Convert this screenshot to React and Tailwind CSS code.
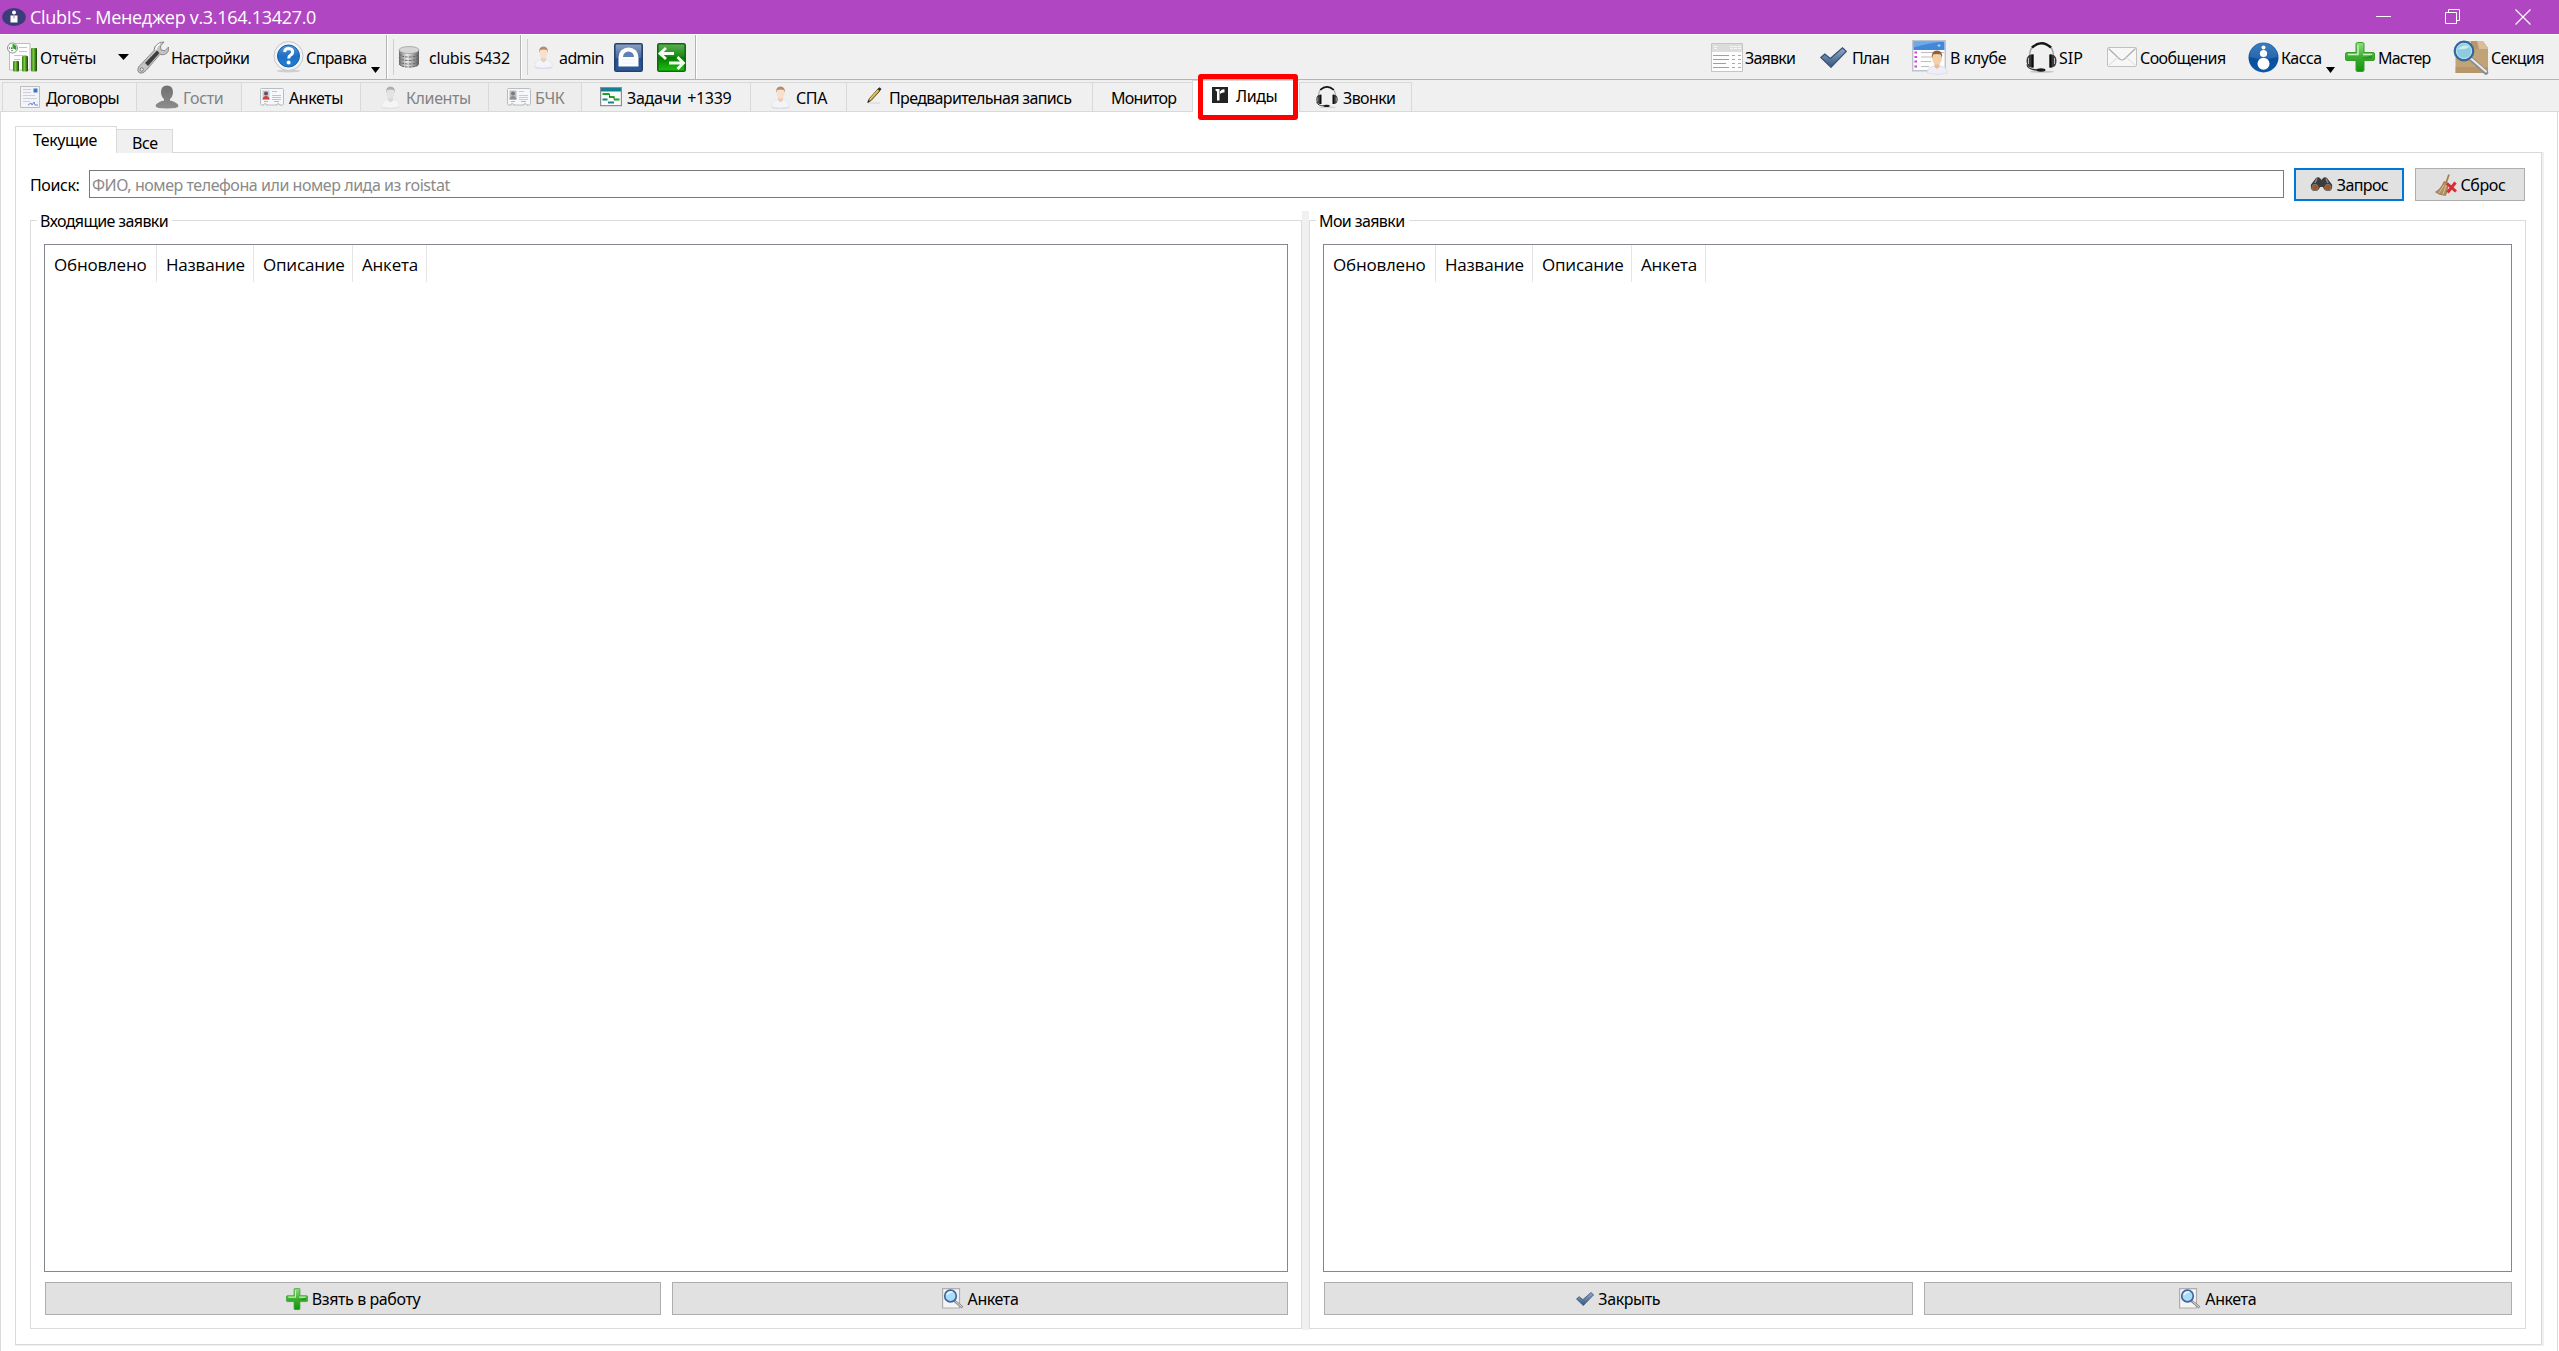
import React from "react";

/* ---------- Icons ---------- */

const LogoIcon = () => (
  <svg width="24" height="18" viewBox="0 0 24 18">
    <ellipse cx="12" cy="9" rx="11.8" ry="9" fill="#3b3c78" />
    <circle cx="12" cy="4.6" r="2" fill="#fff" />
    <path d="M8.5 7.5h7v7h-7z" fill="#fff" />
    <path d="M12 7.5v3" stroke="#8d8db5" />
  </svg>
);

const ReportIcon = () => (
  <svg width="30" height="30" viewBox="0 0 30 30">
    <defs>
      <linearGradient id="bar" x1="0" x2="1">
        <stop offset="0" stopColor="#2d7a10" />
        <stop offset=".4" stopColor="#7ccb3e" />
        <stop offset="1" stopColor="#123f06" />
      </linearGradient>
    </defs>
    <path d="M2.500 1.500h20.500v26.500H2.500z" fill="#fdfdfd" stroke="#bdbdbd" />
    <path d="M12 5.500h8M12 9.500h8M7 13.500h13M7 17.500h6" stroke="#c4c4c4" />
    <circle cx="5.500" cy="6" r="5" fill="#f6f6f6" stroke="#8e9a8e" />
    <path d="M5.500 6V2a4 4 0 0 1 3.500 6z" fill="#28a428" />
    <path d="M5 6v4M5 6L2 6" stroke="#333" strokeDasharray="1 1" />
    <rect x="6" y="19" width="6" height="10.500" rx="1" fill="url(#bar)" />
    <rect x="15" y="14" width="6" height="15.500" rx="1" fill="url(#bar)" />
    <rect x="24" y="6" width="6" height="23.500" rx="1" fill="url(#bar)" />
  </svg>
);

const WrenchIcon = () => (
  <svg width="32" height="33" viewBox="0 0 32 33">
    <path
      d="M20 3.500Q23 .5 27 1l-3.500 4 .5 4 4 .8L31.500 6q.8 5-3 7-2.500 1.500-5.500.3L9 29.500q-3 3.500-6.500 2.500-3-2-1-6L17 9.500q0-4 3-6z"
      fill="#c4c4c4"
      stroke="#777"
      strokeWidth=".8"
    />
    <path d="M8 22L20 9.500l2.500 2.500L11 25z" fill="#3e3e3e" />
    <path d="M19 9q0-4 4-6" stroke="#fff" strokeWidth="1.500" fill="none" />
    <circle cx="4.800" cy="28.500" r="1.600" fill="#efefef" stroke="#666" strokeWidth=".8" />
  </svg>
);

const HelpIcon = () => (
  <svg width="31" height="32" viewBox="0 0 31 32">
    <defs>
      <linearGradient id="help" x1="0" x2="0" y1="0" y2="1">
        <stop offset="0" stopColor="#5c9bd8" />
        <stop offset=".5" stopColor="#1e6fc4" />
        <stop offset="1" stopColor="#1d7fd8" />
      </linearGradient>
    </defs>
    <ellipse cx="15.500" cy="30" rx="12" ry="1.500" fill="#cfcfcf" />
    <circle cx="15.500" cy="15" r="14.500" fill="#f1f3f5" stroke="#c2c6ca" />
    <circle cx="15.500" cy="15" r="11" fill="url(#help)" stroke="#1b5da6" />
    <path
      d="M11.500 11q.3-3.500 4.200-3.500 4 .2 4 3.500 0 2-2.300 3.300-1.700 1-1.700 3.200"
      stroke="#fff"
      strokeWidth="3"
      fill="none"
    />
    <circle cx="15.600" cy="21.500" r="2" fill="#fff" />
  </svg>
);

const DatabaseIcon = () => (
  <svg width="22" height="22" viewBox="0 0 22 22">
    <defs>
      <linearGradient id="db" x1="0" x2="1">
        <stop offset="0" stopColor="#6c6c6c" />
        <stop offset=".4" stopColor="#ededed" />
        <stop offset="1" stopColor="#5e5e5e" />
      </linearGradient>
    </defs>
    <path d="M1 4v14q1.500 3.500 10 3.500t10-3.500V4z" fill="url(#db)" />
    <path
      d="M1 8q2 3 10 3t10-3M1 11.500q2 3 10 3t10-3M1 15q2 3 10 3t10-3M1 18q2 3 10 3t10-3"
      stroke="#666"
      strokeDasharray="2.500 1"
      fill="none"
    />
    <ellipse cx="11" cy="4" rx="10" ry="3.500" fill="#d6d6d6" stroke="#9a9a9a" strokeWidth=".7" />
  </svg>
);

const UserIcon = ({ faded }) => (
  <svg width="19" height="23" viewBox="0 0 19 23">
    <ellipse cx="9.500" cy="21.500" rx="9" ry="1.300" fill={faded ? "#dedede" : "#d5d5dd"} />
    <path
      d="M.8 21q-.3-6 5.200-7.500h7q5.500 1.500 5.200 7.500-9 2.200-17.400 0z"
      fill={faded ? "#f5f5f5" : "#f3f3fb"}
      stroke={faded ? "#e2e2e2" : "#dddde8"}
      strokeWidth=".6"
    />
    <path d="M7 11h5v3.500l-2.500 2-2.500-2z" fill={faded ? "#d9d9d9" : "#eccfb4"} />
    <ellipse cx="9.500" cy="7" rx="4" ry="5.500" fill={faded ? "#e3e3e3" : "#f7e1cc"} />
    <path
      d="M5.200 7Q4.500.5 9.500.5T13.800 7l-1-3q-3-1-6.600 0z"
      fill={faded ? "#adadad" : "#b08e6c"}
    />
  </svg>
);

const LockIcon = () => (
  <svg width="29" height="29" viewBox="0 0 29 29">
    <defs>
      <linearGradient id="lock" x1="0" x2="0" y1="0" y2="1">
        <stop offset="0" stopColor="#8fa3c4" />
        <stop offset=".5" stopColor="#456a9f" />
        <stop offset=".55" stopColor="#24508d" />
        <stop offset="1" stopColor="#2c5a9c" />
      </linearGradient>
    </defs>
    <rect x=".8" y=".8" width="27.400" height="27.400" rx="1.500" fill="url(#lock)" stroke="#27416c" strokeWidth="1.600" />
    <path d="M4.500 23.500V14a10 9.500 0 0 1 20 0v9.500z" fill="#fff" />
    <path d="M9 14a5.500 5.500 0 0 1 11 0z" fill="#5d81b4" />
    <path d="M8 17h13M8 20h13" stroke="#eaf0f8" />
  </svg>
);

const SwapIcon = () => (
  <svg width="29" height="29" viewBox="0 0 29 29">
    <defs>
      <linearGradient id="swap" x1="0" x2="0" y1="0" y2="1">
        <stop offset="0" stopColor="#5fae55" />
        <stop offset=".45" stopColor="#1d8a17" />
        <stop offset=".5" stopColor="#067a02" />
        <stop offset="1" stopColor="#1cc30e" />
      </linearGradient>
    </defs>
    <rect x=".8" y=".8" width="27.400" height="27.400" rx="1.500" fill="url(#swap)" stroke="#0f6a0b" strokeWidth="1.600" />
    <path
      d="M17 10.500H4M9 5l-6 5.500L9 16M12 20h14M20.500 14l6 6-6 6"
      stroke="#f4fff2"
      strokeWidth="2.800"
      fill="none"
    />
  </svg>
);

const ListIcon = () => (
  <svg width="32" height="29" viewBox="0 0 32 29">
    <path d="M.5.500h31v28H.5z" fill="#fdfdfd" stroke="#c5c5c5" />
    <path d="M1 1h30v8H1z" fill="#dcdcdc" />
    <path d="M3 3.500h3M19 3.500h3M23 3.500h3M27 3.500h3M3 5.500h3M19 5.500h3M23 5.500h3M27 5.500h3" stroke="#f8f8f8" />
    <path d="M2 12.500h16M2 16.500h16M2 20.500h13M2 24.500h16" stroke="#9f9f9f" />
    <path d="M21 12.500h3M21 16.500h3M21 20.500h3M21 24.500h3M27 12.500h3M27 16.500h3M27 20.500h3M27 24.500h3" stroke="#a8a8a8" />
  </svg>
);

const CheckIcon = ({ width = 27, height = 21 }) => (
  <svg width={width} height={height} viewBox="0 0 27 21" preserveAspectRatio="none">
    <defs>
      <linearGradient id="check" x1="0" x2="0" y1="0" y2="1">
        <stop offset="0" stopColor="#91aac9" />
        <stop offset="1" stopColor="#35567f" />
      </linearGradient>
    </defs>
    <path
      d="M.8 10.500l4-3.500 5.500 4.500L22.500.8l3.800 3.500L11 20.300z"
      fill="url(#check)"
      stroke="#344f73"
      strokeWidth="1.200"
    />
  </svg>
);

const ClubIcon = () => (
  <svg width="36" height="35" viewBox="0 0 36 35">
    <path d="M.7.700h32.600v30H.7z" fill="#fdfdfd" stroke="#bdc3ca" strokeWidth="1.400" />
    <path d="M1.500 1.500h31V10h-31z" fill="#4287d8" />
    <path d="M1.500 1.500h31q-14 1-31 6z" fill="#6fa8e8" />
    <path d="M27 4v3M25.500 5.500h3" stroke="#b9d5f5" />
    <path d="M2.500 12.500h2.500M2.500 17h2.500M2.500 21.500h2.500M2.500 26.500h2.500" stroke="#d63fd6" strokeWidth="1.800" />
    <path d="M9 12.500h23M9 17h12M9 21.500h10M9 26.500h8" stroke="#bcbcbc" strokeWidth="1.200" />
    <path d="M15 33q0-6 7-7h6q7 1 7.500 7-10 3-20.500 0z" fill="#eeeefa" stroke="#d8d8e6" strokeWidth=".7" />
    <path d="M22.500 22h5v5l-2.500 2-2.500-2z" fill="#e8bd92" />
    <ellipse cx="25" cy="18" rx="4.800" ry="6.800" fill="#f4d0aa" />
    <path d="M20 18q-1-7.500 5-7.500T30 18l-1.200-3.500q-4-1-7.600 0z" fill="#8b6238" />
  </svg>
);

const HeadsetIcon = ({ size = 31 }) => (
  <svg width={size} height={size} viewBox="0 0 31 31">
    <ellipse cx="16" cy="29.800" rx="12" ry="1" fill="#c5c5c5" />
    <path d="M3.500 14Q4 6 8 3.500" stroke="#a5a5a5" strokeWidth="1.500" fill="none" />
    <path d="M27.500 14Q27 6 23 3.500" stroke="#a5a5a5" strokeWidth="1.500" fill="none" />
    <path d="M6 5.500Q15.500-3 25 5.500" stroke="#151515" strokeWidth="2.400" fill="none" />
    <path d="M5 12.500h2.500v13H5Q.5 24.500.5 19T5 12.500z" fill="#3a3a3a" />
    <path d="M26 12.500h-2.500v13H26q4.500-1 4.500-6.500T26 12.500z" fill="#3a3a3a" />
    <path d="M6.500 12.500v13M24.500 12.500v13" stroke="#0c0c0c" strokeWidth="2" />
    <path d="M2.500 16v6M28.500 16v6" stroke="#bbb" />
    <path d="M1 22.500q1 5.500 11 5.500" stroke="#333" strokeWidth="1.300" fill="none" />
    <ellipse cx="15" cy="28" rx="4.500" ry="1.700" fill="#1c1c1c" />
  </svg>
);

const MailIcon = () => (
  <svg width="30" height="20" viewBox="0 0 30 20">
    <rect x=".5" y=".5" width="29" height="19" rx="1" fill="#f7f7f7" stroke="#c0c0c0" />
    <path d="M1.500 1.500l11 10.500q2.500 2 5 0l11-10.500" fill="none" stroke="#adadad" strokeWidth="1.200" />
    <path d="M1.500 18.500L11 10M28.500 18.500L19 10" stroke="#d8d8d8" />
  </svg>
);

const CashIcon = () => (
  <svg width="31" height="31" viewBox="0 0 31 31">
    <defs>
      <linearGradient id="cash" x1="0" x2="0" y1="0" y2="1">
        <stop offset="0" stopColor="#2f72b8" />
        <stop offset=".55" stopColor="#0a4f9c" />
        <stop offset="1" stopColor="#0c59ac" />
      </linearGradient>
    </defs>
    <circle cx="15.500" cy="15.500" r="15" fill="url(#cash)" />
    <path d="M1.500 15a14 13.500 0 0 1 28 0q-14 4-28 0z" fill="#5a93cc" opacity=".35" />
    <circle cx="15.500" cy="5.500" r="2" fill="#fff" />
    <circle cx="15.500" cy="11.500" r="3.600" fill="#fff" />
    <circle cx="15.500" cy="21.800" r="6" fill="#fff" />
  </svg>
);

const PlusIcon = ({ size = 30 }) => (
  <svg width={size} height={size} viewBox="0 0 30 30">
    <defs>
      <linearGradient id="plus" x1="0" x2="0" y1="0" y2="1">
        <stop offset="0" stopColor="#8fe07e" />
        <stop offset=".5" stopColor="#3cae32" />
        <stop offset="1" stopColor="#109608" />
      </linearGradient>
    </defs>
    <path
      d="M11 2q0-1.500 1.500-1.500h5Q19 .5 19 2v8.500h9q1.500 0 1.500 1.500v5q0 1.500-1.500 1.500h-9V28q0 1.500-1.500 1.500h-5Q11 29.500 11 28v-9.500H2Q.5 18.500.5 17v-5q0-1.500 1.500-1.500h9z"
      fill="url(#plus)"
      stroke="#3a9a2c"
    />
    <path d="M13 3v9.500H3M18 12.500h9" stroke="#c5f2b8" strokeWidth="1.500" fill="none" />
    <path d="M17 16q6-1 10-3v3.500H17z" fill="#18851a" opacity=".6" />
  </svg>
);

const SectionIcon = () => (
  <svg width="36" height="35" viewBox="0 0 36 35">
    <path d="M2.500 8L8 1h22l5 7v25h-32.500z" fill="#c2a377" />
    <path d="M8 1h22l5 8H2.500z" fill="#d8bf98" />
    <path d="M18 1h6l2 8h-8z" fill="#b99667" />
    <path d="M2.500 27h32.500v6h-32.500z" fill="#a98a5e" opacity=".5" />
    <path d="M18 19l15 13.500" stroke="#8c8c8c" strokeWidth="4.500" strokeLinecap="round" />
    <path d="M18 18.500l15 13" stroke="#ececec" strokeWidth="2" strokeLinecap="round" />
    <circle cx="11" cy="11" r="9.300" fill="#8ecbe0" stroke="#31669e" strokeWidth="2.200" />
    <circle cx="11" cy="11" r="7.500" fill="none" stroke="#b9e3e6" strokeWidth="1" />
    <path d="M5 9q4-5 11-3-1 4-11 3z" fill="#c9ebf2" />
  </svg>
);

const ContractIcon = () => (
  <svg width="20" height="22" viewBox="0 0 20 22">
    <path d="M.5.500h19v21H.5z" fill="#f2f4f7" stroke="#bcbcbc" />
    <path d="M3 3.500h8M3 6.500h8M3 9.500h12M3 12.500h14M3 15.500h7" stroke="#cdd1d7" />
    <path d="M13.500 2.500h4v4h-4z" fill="#3f74c9" />
    <path d="M8 19l3-2 1 2 2-3 1 3h3" stroke="#6677cf" fill="none" strokeWidth=".9" />
  </svg>
);

const GuestIcon = () => (
  <svg width="24" height="24" viewBox="0 0 24 24">
    <defs>
      <linearGradient id="guest" x1="0" x2="0" y1="0" y2="1">
        <stop offset="0" stopColor="#707070" />
        <stop offset="1" stopColor="#8d8d8d" />
      </linearGradient>
    </defs>
    <path
      d="M12 .5q6 .2 6 6.500 0 4.500-3 7v1.500q8 2 8.500 5.500 0 2.500-11.500 2.500T.5 21Q1 17.500 9 15.500V14Q6 11.500 6 7 6 .7 12 .5z"
      fill="url(#guest)"
    />
  </svg>
);

const CardIcon = ({ faded }) => (
  <svg width="24" height="19" viewBox="0 0 24 19">
    <rect x=".5" y=".5" width="23" height="16.500" rx="1" fill="#f5f7fa" stroke="#b9bcc0" />
    <path d="M3 17.500q2-3.500 4.500 0M16 17.500q2-3.500 4.500 0" stroke="#a9a9a9" fill="#fff" />
    <path d="M2.500 2.500h7v9h-7z" fill={faded ? "#bdbdbd" : "#b7cdea"} />
    <circle cx="6" cy="5.500" r="2" fill={faded ? "#7b7b7b" : "#7c4a3a"} />
    <path d="M2.500 11.500q.5-3.500 3.500-3.500t3.500 3.500z" fill={faded ? "#8e8e8e" : "#d5402f"} />
    <path d="M12 3.500h5M12 7.500h9M12 9.500h9M12 11.500h9" stroke={faded ? "#cacaca" : "#b0c5e4"} />
    <path d="M4 13.500h4M14 13.500h5" stroke="#b3b3b3" />
  </svg>
);

const TasksIcon = () => (
  <svg width="22" height="20" viewBox="0 0 22 20">
    <path d="M.6.600h20.800v18H.6z" fill="#fbfbfb" stroke="#8b8f92" strokeWidth="1.200" />
    <path d="M1 1h20v3.500H1z" fill="#17808e" />
    <path d="M2.500 7h7M9 10h5.500M14 12.500h5.500" stroke="#1fa51f" strokeWidth="1.800" />
    <path d="M9.500 7v3M14 10v2.500" stroke="#444" strokeWidth=".8" />
    <path d="M2.500 12.500h5M8 15.500h6" stroke="#1b8392" strokeWidth="1.800" />
  </svg>
);

const PencilIcon = () => (
  <svg width="15" height="17" viewBox="0 0 15 17">
    <path d="M1 16h12" stroke="#d3d3d3" />
    <path d="M.8 15.300L2.200 11.800 11 2l2 1.700-8.800 9.800z" fill="#d8ad35" stroke="#4e4425" strokeWidth=".9" />
    <path d="M3 12l8-9" stroke="#fbe384" strokeWidth=".8" />
    <path d="M10.500 2L12.500.3l2 1.800L12.800 4z" fill="#2b2b2b" />
    <path d="M.3 15.700L1.500 13l1.500 1.500z" fill="#222" />
  </svg>
);

const LeadsIcon = () => (
  <svg width="16" height="16" viewBox="0 0 16 16">
    <path d="M0 0h16v16H0z" fill="#232323" />
    <path d="M3.500 2h4v11.500H5V4.500L3.500 3.500z" fill="#fff" />
    <path d="M8 4.500Q9.500 2 12.500 2.300v3.200Q9.500 5 8 7z" fill="#fff" />
  </svg>
);

const BinocularsIcon = () => (
  <svg width="23" height="15" viewBox="0 0 23 15">
    <path d="M6 1q2-1.500 4 0l1.500 2L13 1q2-1.500 4 0l5 6.500q1 5.500-3 6.500-4.500.8-6-4h-3q-1.500 4.800-6 4-4-1-3-6.500z" fill="#3c3c3c" />
    <path d="M7 1.500L5 6M16 1.500l2 4.500" stroke="#8a8a8a" strokeWidth="1.500" />
    <circle cx="5" cy="10.500" r="3.200" fill="#a5521d" stroke="#777" />
    <circle cx="18" cy="10.500" r="3.200" fill="#a5521d" stroke="#777" />
  </svg>
);

const BroomIcon = () => (
  <svg width="22" height="22" viewBox="0 0 22 22">
    <path d="M14 .5L11 9" stroke="#a57f50" strokeWidth="1.800" />
    <path d="M9 7.500l4 1.500q0 8-2.500 12.500Q4 21 .5 18 6 15 9 7.500z" fill="#b08d62" stroke="#8d6a42" strokeWidth=".6" />
    <path d="M9 11L4 19M11 11L8 20.500" stroke="#dcc096" />
    <path d="M12 9.500l9 8M20.500 8.500l-8 10" stroke="#d92c33" strokeWidth="3" />
  </svg>
);

const DocSearchIcon = () => (
  <svg width="22" height="21" viewBox="0 0 22 21">
    <path d="M.6.600H17.500V20H.6z" fill="#f5f5f5" stroke="#adadad" strokeWidth="1.200" />
    <path d="M12 12.500l8.500 7" stroke="#8a8a8a" strokeWidth="2.600" />
    <path d="M13.500 13.500l6.500 5.500" stroke="#e6e6e6" strokeWidth=".9" />
    <circle cx="8.500" cy="8" r="5.800" fill="#abdcf8" stroke="#42659c" strokeWidth="1.700" />
    <path d="M5 7q1-3.500 5.500-3" stroke="#e8f8ff" strokeWidth="1.500" fill="none" />
  </svg>
);

const Arrow = ({ className, width }) => (
  <svg className={`shrink-0 ${className}`} width={width} height="6" viewBox="0 0 10 6" preserveAspectRatio="none">
    <path d="M0 0h10L5 6z" fill="#000" />
  </svg>
);

/* ---------- Toolbar ---------- */

const ToolItem = ({ icon, iconClass, label, labelClass }) => (
  <>
    <span className={`flex h-full shrink-0 items-center ${iconClass}`}>{icon}</span>
    <span className={`shrink-0 pt-0.5 whitespace-nowrap ${labelClass}`}>{label}</span>
  </>
);

const Toolbar = () => (
  <div className="flex h-[46px] items-center border-t border-b border-t-white border-b-[#b4b4b4] bg-[#f0f0f0]">
    <div className="flex h-full w-[387px] items-center border-r border-[#b4b4b4]">
      <ToolItem icon={<ReportIcon />} iconClass="ml-[7px] w-[33px]" label="Отчёты" labelClass="w-[56px] tracking-[-0.2px]" />
      <Arrow className="ml-[22px]" width={11} />
      <ToolItem icon={<WrenchIcon />} iconClass="ml-2 w-[34px]" label="Настройки" labelClass="w-[77px] tracking-[-0.6px]" />
      <ToolItem icon={<HelpIcon />} iconClass="ml-[25px] w-[33px]" label="Справка" labelClass="w-[60px] tracking-[-0.6px]" />
      <Arrow className="mt-[25px] ml-[5px]" width={9} />
    </div>
    <div className="flex h-full w-[134px] items-center border-x border-l-white border-r-[#b4b4b4]">
      <span className="ml-[5px] h-9 w-px bg-[#cfcfcf]" />
      <ToolItem icon={<DatabaseIcon />} iconClass="ml-1 w-[31px]" label="clubis 5432" labelClass="w-[81px] tracking-[-0.3px]" />
    </div>
    <div className="flex h-full w-[175px] items-center border-x border-l-white border-r-[#b4b4b4]">
      <span className="ml-[5px] h-9 w-px bg-[#cfcfcf]" />
      <ToolItem icon={<UserIcon />} iconClass="ml-1.5 w-[25px]" label="admin" labelClass="w-[43px] tracking-[-0.6px]" />
      <span className="ml-3 w-[29px]"><LockIcon /></span>
      <span className="ml-3.5 w-[29px]"><SwapIcon /></span>
    </div>
    <div className="mr-4 flex h-full flex-1 items-center justify-end border-l border-white">
      <ToolItem icon={<ListIcon />} iconClass="w-[34px]" label="Заявки" labelClass="w-[49px] tracking-[-0.8px]" />
      <ToolItem icon={<CheckIcon />} iconClass="ml-[26px] w-8" label="План" labelClass="w-9 tracking-[-0.7px]" />
      <ToolItem icon={<ClubIcon />} iconClass="ml-6 w-[38px]" label="В клубе" labelClass="w-14" />
      <ToolItem icon={<HeadsetIcon />} iconClass="ml-5 w-[33px]" label="SIP" labelClass="w-6 tracking-normal" />
      <ToolItem icon={<MailIcon />} iconClass="ml-6 w-[33px]" label="Сообщения" labelClass="w-[84px] tracking-[-0.6px]" />
      <ToolItem icon={<CashIcon />} iconClass="ml-6 w-[33px]" label="Касса" labelClass="w-10 tracking-[-0.5px]" />
      <Arrow className="mt-[25px] ml-[5px]" width={9} />
      <ToolItem icon={<PlusIcon />} iconClass="ml-2.5 w-[33px]" label="Мастер" labelClass="w-[52px] tracking-[-0.8px]" />
      <ToolItem icon={<SectionIcon />} iconClass="ml-[23px] w-[38px]" label="Секция" labelClass="w-[52px] tracking-[-0.6px]" />
    </div>
  </div>
);

/* ---------- Main tabs ---------- */

const tabs = [
  { label: "Договоры", icon: <ContractIcon />, tab: "w-[134px] pl-[17px] tracking-[-0.6px]", iconClass: "w-[26px]" },
  { label: "Гости", icon: <GuestIcon />, tab: "w-[105px] pl-[18px]", iconClass: "w-7", disabled: true },
  { label: "Анкеты", icon: <CardIcon />, tab: "w-[119px] pl-[18px]", iconClass: "w-[29px]" },
  { label: "Клиенты", icon: <UserIcon faded />, tab: "w-[128px] pl-5", iconClass: "w-[25px]", disabled: true },
  { label: "БЧК", icon: <CardIcon faded />, tab: "w-[93px] pl-[18px]", iconClass: "w-7", disabled: true },
  { label: "Задачи +1339", icon: <TasksIcon />, tab: "w-[169px] pl-[18px] tracking-[-0.3px] [word-spacing:2px]", iconClass: "w-[27px]" },
  { label: "СПА", icon: <UserIcon />, tab: "w-24 pl-5", iconClass: "w-[25px]" },
  { label: "Предварительная запись", icon: <PencilIcon />, tab: "w-[246px] pl-5 tracking-[-0.65px]", iconClass: "w-[22px] pb-1" },
  { label: "Монитор", tab: "w-[100px] pl-[18px] tracking-[-0.7px]" },
];

const Tab = ({ label, icon, tab, iconClass, disabled }) => (
  <div
    className={`flex h-[30px] shrink-0 items-center border-t border-b border-l border-[#d9d9d9] ${tab} ${
      disabled ? "bg-[#ededed] text-[#838383]" : "bg-[#f0f0f0]"
    }`}
  >
    {icon && <span className={`shrink-0 ${iconClass}`}>{icon}</span>}
    <span className="pt-0.5 whitespace-nowrap">{label}</span>
  </div>
);

const TabBar = () => (
  <div className="flex h-8 items-end bg-[#f0f0f0]">
    <span className="w-0.5 self-stretch border-b border-[#d9d9d9]" />
    {tabs.map((t) => (
      <Tab key={t.label} {...t} />
    ))}
    <div className="relative flex h-8 w-[107px] items-center border-t border-l border-[#d9d9d9] bg-white pl-[19px]">
      <span className="w-6 pb-1"><LeadsIcon /></span>
      <span className="pb-0.5">Лиды</span>
      {/* Highlight frame around the active tab */}
      <span className="absolute -top-[7px] left-[5px] h-[46px] w-[100px] rounded-[3px] border-5 border-[#fe0000]" />
    </div>
    <Tab
      label="Звонки"
      icon={<HeadsetIcon size={22} />}
      tab="w-[113px] border-r pl-4 tracking-[-0.6px]"
      iconClass="w-[27px]"
    />
    <span className="flex-1 self-stretch border-b border-[#d9d9d9]" />
  </div>
);

/* ---------- Lead panels ---------- */

const Button = ({ icon, children, className = "" }) => (
  <button
    className={`flex h-[33px] items-center justify-center gap-1 bg-[#e1e1e1] ${
      className || "flex-1 border border-[#adadad]"
    }`}
  >
    {icon}
    <span>{children}</span>
  </button>
);

const columns = [
  { title: "Обновлено", width: "w-28" },
  { title: "Название", width: "w-[97px]" },
  { title: "Описание", width: "w-[99px]" },
  { title: "Анкета", width: "w-[74px]" },
];

const LeadPanel = ({ title, className, children }) => (
  <fieldset
    className={`relative mt-[9px] flex h-[1109px] flex-col border border-[#dcdcdc] px-[13px] pt-[23px] ${className}`}
  >
    <span className="absolute -top-[10px] left-[6px] bg-white pr-1 pl-[3px] leading-5 tracking-[-0.6px]">{title}</span>
    <div className="flex h-[1028px] items-start border border-[#828790] bg-white">
      {columns.map((c) => (
        <div
          key={c.title}
          className={`flex h-[37px] items-center border-r border-[#e5e5e5] pt-[3px] pl-[9px] font-['Open_Sans','Noto_Sans',sans-serif] text-[17px] tracking-[-0.2px] ${c.width}`}
        >
          {c.title}
        </div>
      ))}
    </div>
    <div className="ml-px mt-2.5 flex gap-[11px]">{children}</div>
  </fieldset>
);

const App = () => (
  <div className="flex h-[1351px] w-[2559px] flex-col overflow-hidden bg-white font-['Noto_Sans','Open_Sans',sans-serif] text-[16px] leading-5 tracking-[-0.4px] text-black">
    {/* Title bar */}
    <div className="flex h-[34px] items-center bg-[#b146c2] text-white">
      <span className="ml-0.5 w-7"><LogoIcon /></span>
      <span className="font-['Open_Sans','Noto_Sans',sans-serif] text-[18px] tracking-[-0.3px]">
        ClubIS - Менеджер v.3.164.13427.0
      </span>
      <svg className="mr-7 ml-auto" width="155" height="16" viewBox="0 0 155 16" fill="none" stroke="#fff">
        <path d="M0 7.500h15M69.500 3.500h11v11h-11zM72.500 3.500v-3h11v11h-3" />
        <path d="M139.500.500l15 15M154.500.500l-15 15" strokeWidth="1.200" />
      </svg>
    </div>

    <Toolbar />
    <TabBar />

    <div className="mr-px flex-1 border-x border-[#d9d9d9] bg-white pr-[13px] pl-3.5">
      {/* Inner tabs */}
      <div className="flex h-[41px] items-end">
        <div className="z-10 flex h-[27px] w-[102px] items-center border-x border-t border-[#d9d9d9] bg-white pl-[17px]">
          Текущие
        </div>
        <div className="flex h-6 w-14 items-center border-t border-r border-[#d9d9d9] bg-[#f0f0f0] pt-0.5 pl-[15px]">
          Все
        </div>
      </div>
      <div className="-mt-px h-[1194px] w-[2529px] border-r-2 border-b border-[#f0f0f0]">
        <div className="h-full border border-[#d9d9d9] pr-[15px] pl-3.5">
          {/* Search row */}
          <div className="flex h-[58px] items-start pt-[15px]">
            <label className="mt-[7px] w-[59px]">Поиск:</label>
            <input
              className="mt-0.5 h-7 w-[2195px] border border-[#7a7a7a] bg-white pt-px pl-0.5 tracking-[-0.45px] outline-none placeholder:text-[#8a8a8a]"
              placeholder="ФИО, номер телефона или номер лида из roistat"
            />
            <Button icon={<BinocularsIcon />} className="ml-2.5 w-[110px] border-2 border-[#0078d7] tracking-[-0.6px]">
              Запрос
            </Button>
            <Button icon={<BroomIcon />} className="ml-[11px] w-[110px] border border-[#adadad]">
              Сброс
            </Button>
          </div>

          <div className="flex">
            <LeadPanel title="Входящие заявки" className="w-[1272px]">
              <Button icon={<PlusIcon size={22} />}>Взять в работу</Button>
              <Button icon={<DocSearchIcon />}>Анкета</Button>
            </LeadPanel>
            <span className="h-[1119px] w-[7px] bg-[#f0f0f0]" />
            <LeadPanel title="Мои заявки" className="w-[1217px]">
              <Button icon={<CheckIcon width={18} height={14} />}>Закрыть</Button>
              <Button icon={<DocSearchIcon />}>Анкета</Button>
            </LeadPanel>
          </div>
        </div>
      </div>
    </div>
  </div>
);

export default App;
